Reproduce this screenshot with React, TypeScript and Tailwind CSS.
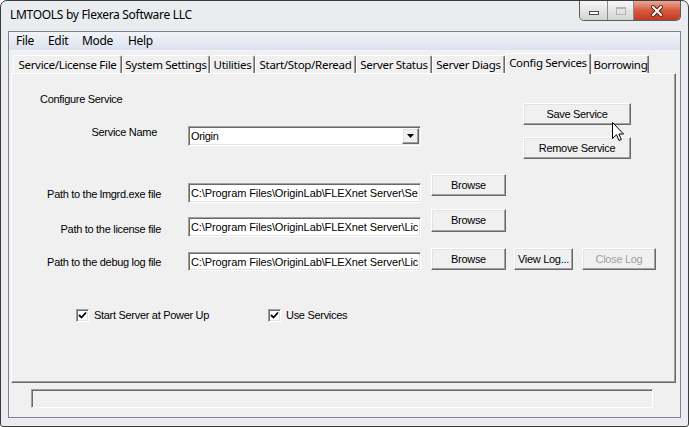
import React from 'react';

const raised =
  'flex items-center justify-center bg-[#f0f0f0] border border-t-white border-l-white border-b-[#696969] border-r-[#696969] shadow-[inset_-1px_-1px_0_#a0a0a0,inset_1px_1px_0_#e3e3e3]';
const sunken =
  'bg-white border border-t-[#a0a0a0] border-l-[#a0a0a0] border-b-white border-r-white shadow-[inset_1px_1px_0_#696969,inset_-1px_-1px_0_#e3e3e3]';
const tabCls =
  'flex items-center justify-center rounded-t-[2px] border-t border-l border-r border-t-white border-l-white border-r-[#696969] shadow-[inset_-1px_0_0_#a0a0a0] whitespace-nowrap';

const tabs = [
  { label: 'Service/License File', w: 'w-[109px]' },
  { label: 'System Settings', w: 'w-[88px]' },
  { label: 'Utilities', w: 'w-[45px]' },
  { label: 'Start/Stop/Reread', w: 'w-[101px]' },
  { label: 'Server Status', w: 'w-[76px]' },
  { label: 'Server Diags', w: 'w-[73px]' },
];

const paths = [
  {
    label: 'Path to the lmgrd.exe file',
    value: 'C:\\Program Files\\OriginLab\\FLEXnet Server\\Server\\lmgrd.exe',
    row: 'mt-[15px] h-[22px]',
    input: 'mt-[9px] h-[20px]',
    labelTop: 'mt-[14px]',
    btn: 'h-[22px]',
  },
  {
    label: 'Path to the license file',
    value: 'C:\\Program Files\\OriginLab\\FLEXnet Server\\License\\origin.lic',
    row: 'mt-[13px] h-[23px]',
    input: 'mt-[8px] h-[20px]',
    labelTop: 'mt-[14px]',
    btn: 'h-[23px]',
  },
  {
    label: 'Path to the debug log file',
    value: 'C:\\Program Files\\OriginLab\\FLEXnet Server\\License\\debug.log',
    row: 'mt-[16px] h-[22px]',
    input: 'mt-[4px] h-[19px]',
    labelTop: 'mt-[8px]',
    btn: 'h-[22px]',
    extra: true,
  },
];

function CheckBox({ label, w }: { label: string; w: string }) {
  return (
    <div className={`flex items-center ${w}`}>
      <div className={`${sunken} w-[13px] h-[13px] flex items-center justify-center`}>
        <svg width="9" height="9" viewBox="0 0 9 9">
          <path d="M1 4 L3.5 6.5 L8 1.5" fill="none" stroke="#000" strokeWidth="1.8" />
        </svg>
      </div>
      <span className="ml-[5px]">{label}</span>
    </div>
  );
}

export default function App() {
  return (
    <div className="relative w-[689px] h-[427px] overflow-hidden flex flex-col bg-[#eaecef] border border-[#3c3c3c] rounded-t-[7px] rounded-b-[3px] font-['Noto_Sans',sans-serif] text-black">
      {/* title bar */}
      <div className="h-[30px] shrink-0 pl-[9px] pt-[6px] text-[12px] leading-[16px] tracking-[-0.3px]">
        LMTOOLS by Flexera Software LLC
      </div>
      <div className="absolute top-0 right-[7px] flex h-[20px] rounded-b-[5px] border border-t-0 border-[#5b5b5b] overflow-hidden">
        <div className="w-[28px] flex items-end justify-center pb-[5px] bg-gradient-to-b from-[#f7f7f7] to-[#d3d3d3] border-r border-[#8c8c8c]">
          <div className="w-[10px] h-[4px] bg-white border border-[#4a4a4a]" />
        </div>
        <div className="w-[26px] flex items-center justify-center bg-gradient-to-b from-[#f7f7f7] to-[#d3d3d3] border-r border-[#8c8c8c]">
          <div className="w-[10px] h-[8px] border border-[#b5b5b5] border-t-2" />
        </div>
        <div className="w-[46px] flex items-center justify-center bg-gradient-to-b from-[#e9a898] via-[#d4583e] to-[#c23b20]">
          <svg width="14" height="12" viewBox="0 0 14 12">
            <path d="M3 2 L11 10 M11 2 L3 10" stroke="#5b1e14" strokeWidth="4" strokeLinecap="round" />
            <path d="M3 2 L11 10 M11 2 L3 10" stroke="#fff" strokeWidth="2" strokeLinecap="square" />
          </svg>
        </div>
      </div>

      {/* client area */}
      <div className="flex-1 mx-[7px] mb-[8px] flex flex-col bg-[#f0f0f0] border border-[#7f838c]">
        <div className="h-[19px] shrink-0 flex items-center pl-[7px] text-[12px] tracking-[-0.3px] bg-gradient-to-b from-[#f3f4fa] to-[#dbe1ee] border-b border-[#f3f4f8]">
          <span className="w-[32px]">File</span>
          <span className="w-[34px]">Edit</span>
          <span className="w-[46px]">Mode</span>
          <span>Help</span>
        </div>

        {/* tabs */}
        <div className="mt-[2px] h-[20px] flex items-end pl-[4px] text-[11.5px] leading-[14px] tracking-[-0.3px]">
          {tabs.map((t) => (
            <div key={t.label} className={`${tabCls} ${t.w} h-[18px]`}>
              {t.label}
            </div>
          ))}
          <div className={`${tabCls} relative z-10 w-[86px] h-[21px] -mb-[1px] pb-[2px] bg-[#f0f0f0]`}>
            Config Services
          </div>
          <div className={`${tabCls} ml-[1px] w-[57px] h-[18px]`}>Borrowing</div>
        </div>

        {/* tab panel */}
        <div className="ml-[2px] mr-[4px] h-[310px] shrink-0 flex flex-col bg-[#f0f0f0] border border-t-white border-l-white border-b-[#696969] border-r-[#696969] shadow-[inset_-1px_-1px_0_#a0a0a0] font-['Liberation_Sans',Arial,sans-serif] text-[11px] leading-[13px] tracking-[-0.3px]">
          <div className="flex">
            <div className="w-[409px] flex flex-col">
              <div className="ml-[28px] mt-[19px]">Configure Service</div>
              <div className="mt-[20px] flex items-start">
                <div className="w-[145px] text-right">Service Name</div>
                <div className={`${sunken} ml-[31px] w-[233px] h-[20px] flex items-stretch`}>
                  <span className="flex-1 pl-[2px] pt-[3px]">Origin</span>
                  <div className={`${raised} w-[17px] m-[1px]`}>
                    <svg width="7" height="4" viewBox="0 0 7 4">
                      <path d="M0 0 H7 L3.5 4 Z" fill="#000" />
                    </svg>
                  </div>
                </div>
              </div>
            </div>
            <div className="ml-[102px] flex flex-col">
              <div className={`${raised} mt-[29px] w-[108px] h-[22px]`}>Save Service</div>
              <div className={`${raised} mt-[12px] w-[108px] h-[22px]`}>Remove Service</div>
            </div>
          </div>

          {paths.map((p) => (
            <div key={p.label} className={`${p.row} shrink-0 flex items-start`}>
              <div className={`w-[149px] text-right ${p.labelTop}`}>{p.label}</div>
              <input
                readOnly
                value={p.value}
                className={`${sunken} ml-[27px] w-[233px] ${p.input} px-[2px] py-0 outline-none text-[11px] leading-[13px] tracking-[-0.1px] text-black`}
              />
              <div className={`${raised} ml-[10px] w-[75px] ${p.btn}`}>Browse</div>
              {p.extra && (
                <>
                  <div className={`${raised} ml-[8px] w-[59px] ${p.btn}`}>View Log...</div>
                  <div className={`${raised} ml-[9px] w-[74px] ${p.btn} text-[#a0a0a0]`}>Close Log</div>
                </>
              )}
            </div>
          ))}

          <div className="mt-[39px] ml-[64px] flex">
            <CheckBox label="Start Server at Power Up" w="w-[192px]" />
            <CheckBox label="Use Services" w="w-[120px]" />
          </div>
        </div>

        {/* status bar */}
        <div className="mt-[6px] ml-[22px] w-[622px] h-[19px] border border-t-[#a0a0a0] border-l-[#a0a0a0] border-b-white border-r-white shadow-[inset_1px_1px_0_#696969]" />
      </div>

      {/* mouse pointer */}
      <svg className="absolute left-[611px] top-[121px]" width="13" height="20" viewBox="0 0 13 20">
        <path d="M0.5 0.5 L0.5 16.5 L4.5 12.8 L7 18.5 L9.3 17.5 L6.9 12 L11.5 12 Z" fill="#fff" stroke="#000" strokeWidth="1" strokeLinejoin="round" />
      </svg>
    </div>
  );
}
